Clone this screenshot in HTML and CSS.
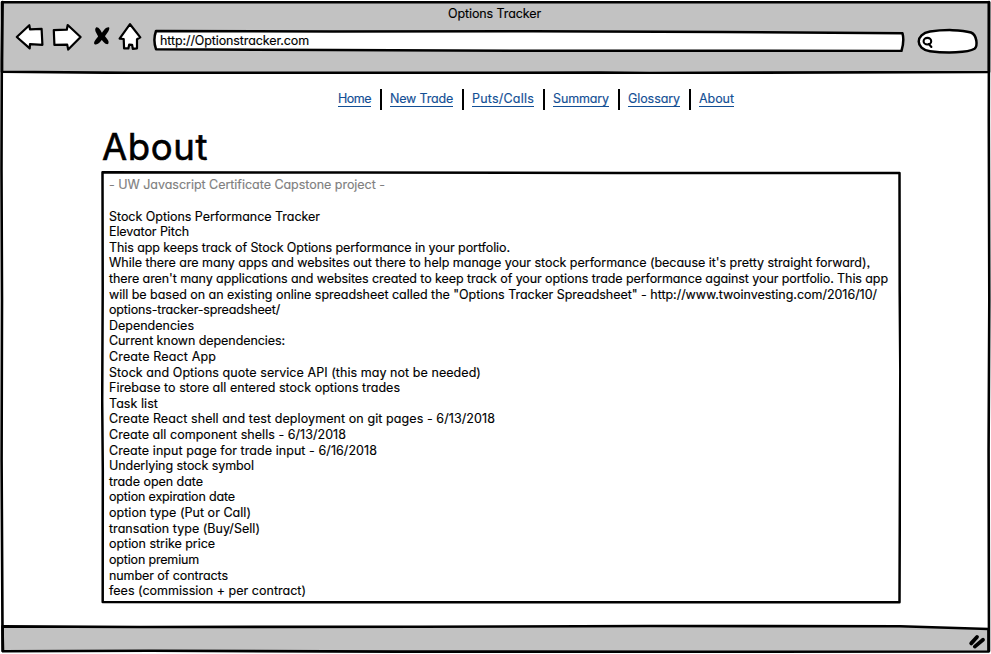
FILE: index.html
```html
<!DOCTYPE html>
<html lang="en">
<head>
<meta charset="utf-8">
<title>Options Tracker</title>
<link rel="stylesheet" href="styles.css">
<script src="fit.js" defer></script>
</head>
<body>
<div class="window">
  <header class="chrome">
    <svg class="sketch" viewBox="0 0 991 74" aria-hidden="true">
      <path class="bar" d="M2 2.2H989V72L650 73 600 72.6 420 72.9 130 72.9 2 71.8Z"/>
    </svg>
    <div class="title"><span data-width="93">Options Tracker</span></div>
    <div class="toolbar">
      <svg class="tools" viewBox="0 0 140 34" aria-hidden="true">
        <g class="outline">
          <path d="M4.8 18 17.3 6.2 18 10.3 29.6 9.8 30.4 25.8 18 25.2 17.7 29.4Z"/>
          <path d="M41.8 11.2 54.8 10.7 55.7 6 68.6 18 56.2 30.6 55.2 25.6 42.4 25.9Z"/>
          <path d="M118 5.2 128.3 18.4 125 20.2 125 29.3 120.8 29.8 120.1 25.8 117.2 25.6 116.4 29.4 112.1 29.4 111.7 20 107.6 19.6Z"/>
        </g>
        <path class="cross" d="M84.3 8.3C87 8 88.6 11.5 90 13.8 91.7 11 94.5 7.5 97.2 8.4 98.1 11 94.5 14.6 93 17.3 95.1 20 97.8 22.4 96.1 25.1 93 25.6 91.4 22.5 89.7 21 88 23.5 84.8 26.8 82.3 25 81.3 22.4 85 19.5 86.1 17.2 84.8 14.6 81.5 10.8 84.3 8.3Z"/>
      </svg>
      <div class="address">
        <svg class="sketch" viewBox="0 0 752 24" aria-hidden="true">
          <path class="shape" d="M3 3 180 3.5 380 3.2 570 4 749.5 5.2Q751.5 13 748.5 22.9L400 22.8 180 22 3 21.2Q-0.2 12 3 3Z"/>
        </svg>
        <span class="url" data-width="149">http://Optionstracker.com</span>
      </div>
      <svg class="search" viewBox="0 0 64 28" aria-hidden="true">
        <path class="shape" d="M14 4.6C28 2.4 46 2.6 55 5.5 61 8 62 19 58.5 21.8 52 25.8 30 26.2 14 24.2 -1 22 -1 7 14 4.6Z"/>
        <ellipse class="lens" cx="11.4" cy="14.2" rx="3.8" ry="3.3"/>
        <path class="lens" d="M12.8 17 15.4 20"/>
      </svg>
    </div>
  </header>

  <main class="page">
    <nav class="links">
      <a data-width="33">Home</a><i></i><a data-width="63">New Trade</a><i></i><a data-width="62">Puts/Calls</a><i></i><a data-width="56">Summary</a><i></i><a data-width="52">Glossary</a><i></i><a data-width="35">About</a>
    </nav>
    <h1><span data-width="106">About</span></h1>
    <section class="panel">
      <svg class="sketch" viewBox="0 0 800 433" aria-hidden="true">
        <path class="box" d="M1.5 1.3 250 1.5 520 1.9 798.5 2 798.7 120 799.3 200 798.5 431.2 500 431.3 200 431.2 1.7 430.9 1.8 300 1.2 230 1.7 120Z"/>
      </svg>
      <p class="muted"><span data-width="276">- UW Javascript Certificate Capstone project -</span></p>
      <p><span data-width="211">Stock Options Performance Tracker</span></p>
      <p><span data-width="80">Elevator Pitch</span></p>
      <p><span data-width="401">This app keeps track of Stock Options performance in your portfolio.</span></p>
      <p><span data-width="761">While there are many apps and websites out there to help manage your stock performance (because it's pretty straight forward),</span></p>
      <p><span data-width="779">there aren't many applications and websites created to keep track of your options trade performance against your portfolio. This app</span></p>
      <p><span data-width="768">will be based on an existing online spreadsheet called the "Options Tracker Spreadsheet" - http://www.twoinvesting.com/2016/10/</span></p>
      <p><span data-width="171">options-tracker-spreadsheet/</span></p>
      <p><span data-width="85">Dependencies</span></p>
      <p><span data-width="176">Current known dependencies:</span></p>
      <p><span data-width="107">Create React App</span></p>
      <p><span data-width="372">Stock and Options quote service API (this may not be needed)</span></p>
      <p><span data-width="291">Firebase to store all entered stock options trades</span></p>
      <p><span data-width="49">Task list</span></p>
      <p><span data-width="386">Create React shell and test deployment on git pages - 6/13/2018</span></p>
      <p><span data-width="237">Create all component shells - 6/13/2018</span></p>
      <p><span data-width="268">Create input page for trade input - 6/16/2018</span></p>
      <p><span data-width="145">Underlying stock symbol</span></p>
      <p><span data-width="94">trade open date</span></p>
      <p><span data-width="126">option expiration date</span></p>
      <p><span data-width="142">option type (Put or Call)</span></p>
      <p><span data-width="151">transation type (Buy/Sell)</span></p>
      <p><span data-width="106">option strike price</span></p>
      <p><span data-width="90">option premium</span></p>
      <p><span data-width="119">number of contracts</span></p>
      <p><span data-width="197">fees (commission + per contract)</span></p>
    </section>
  </main>

  <footer class="status">
    <svg class="sketch" viewBox="0 0 991 30" aria-hidden="true">
      <path class="bar" d="M2.5 2.4 140 3 420 2.8 650 2 900 2.3 988.5 5V27.5L700 27.8 400 27.6 150 26.8 3 27.3Z"/>
      <path class="grip" d="M971.2 19.4 977 13M974.8 22.6 983 15.8"/>
    </svg>
  </footer>
  <svg class="edges" viewBox="0 0 991 654" aria-hidden="true">
    <path d="M2.6 2 1.8 60 1.5 170 2 300 1.6 460 2.6 651M989 2 988.8 120 989.3 300 988.6 450 989 651"/>
  </svg>
</div>
</body>
</html>
```
FILE: styles.css
```css
* { box-sizing: border-box; }

body {
  margin: 0;
  background: #fff;
  color: #000;
  font: 400 13px/15.615px Inter, "Liberation Sans", sans-serif;
  font-feature-settings: "cv11", "ss03";
  -webkit-text-stroke: 0.15px;
}

.window {
  position: relative;
  display: flex;
  flex-direction: column;
  width: 991px;
  height: 654px;
  overflow: hidden;
}

svg { display: block; fill: none; stroke: #000; stroke-linejoin: round; stroke-linecap: round; }
.sketch { position: absolute; inset: 0; width: 100%; height: 100%; z-index: -1; }
.bar { fill: #c2c2c2; stroke-width: 2.6; }
.shape, .outline { fill: #fff; stroke-width: 2.5; }
.outline { stroke-width: 2.2; }
.cross { fill: #000; stroke: none; }
.lens { stroke-width: 2.1; }
.box { fill: #fff; stroke-width: 2.5; }
.grip { stroke-width: 3.8; }
.edges { position: absolute; inset: 0; stroke-width: 2.6; pointer-events: none; }

[data-width] { display: inline-block; white-space: pre; }

.chrome, .status, .panel, .address { position: relative; z-index: 0; }
.chrome { height: 74px; flex: none; }
.title { padding: 6px 2px 0 0; text-align: center; font-size: 12.5px; }
.toolbar { display: flex; margin-left: 12px; }
.tools { width: 140px; height: 34px; margin-top: -3px; }
.address { width: 752px; height: 24px; margin: 6.4px 0 0 1px; padding: 5px 7px 0; }
.url { font-size: 12.5px; line-height: 15px; }
.search { width: 64px; height: 28px; margin: 5.4px 0 0 11px; }

.page { flex: 1; padding-left: 101px; }
.links { display: flex; margin: 15px 0 0 237px; height: 21px; }
.links a { height: 17px; margin-top: 1px; padding-top: 1px; line-height: 16px; color: #134f95; border-bottom: 1px solid #134f95; font-size: 12.5px; }
.links i { width: 2px; height: 21px; margin: 0 8px 0 9px; background: #000; }

h1 { margin: 14px 0 0 1px; height: 47px; font-size: 36.5px; font-weight: 400; line-height: 46px; -webkit-text-stroke: 0.6px; }
.panel { width: 800px; height: 433px; padding: 6.3px 8px 0; }
.panel p { margin: 0; height: 15.615px; white-space: nowrap; font-size: 12.5px; }
.panel .muted { margin-bottom: 15.615px; color: #808080; }

.status { height: 30px; flex: none; }
```
FILE: fit.js
```js
// Track each line of text to the width it has in the sketch.
document.querySelectorAll('[data-width]').forEach(function (el) {
  var natural = el.getBoundingClientRect().width;
  var target = Number(el.dataset.width);
  el.style.letterSpacing = (target - natural) / el.textContent.length + 'px';
});
```
